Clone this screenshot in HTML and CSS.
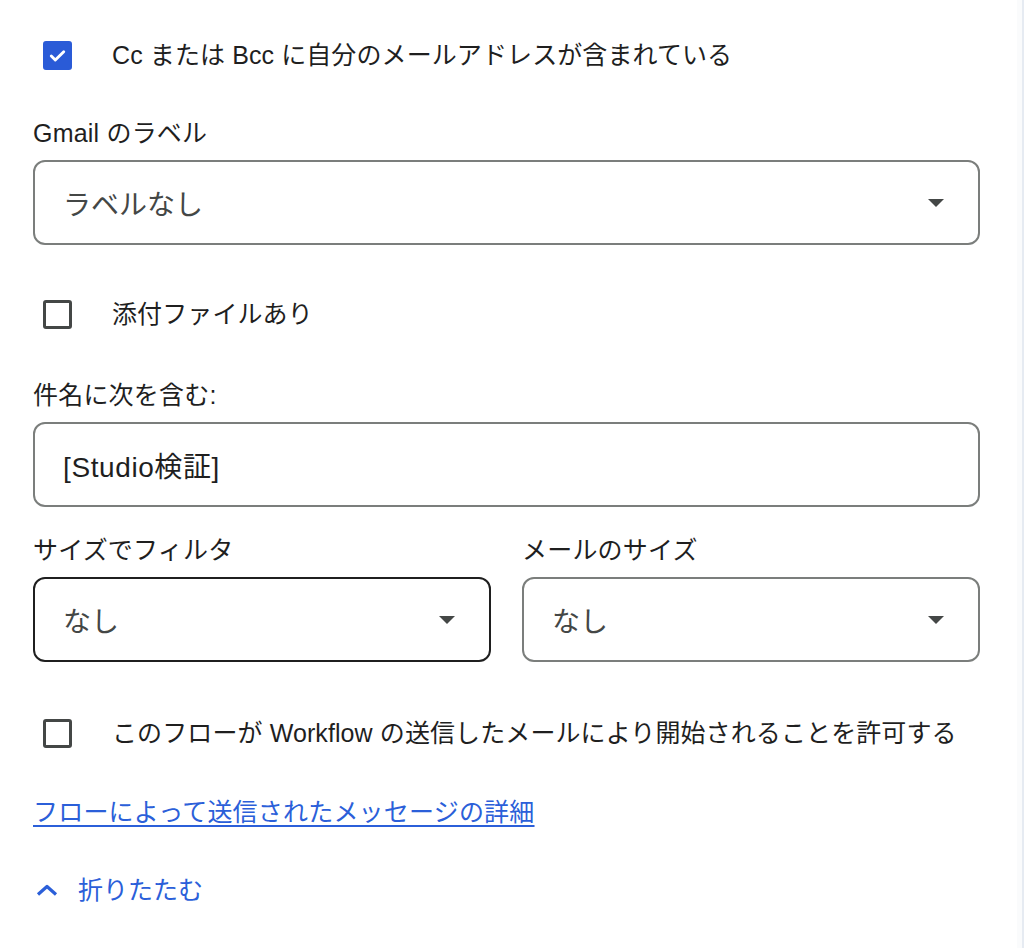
FILE: index.html
```html
<!DOCTYPE html>
<html lang="ja">
<head>
<meta charset="UTF-8">
<meta name="viewport" content="width=device-width, initial-scale=1.0">
<title>メールのトリガー</title>
<link rel="stylesheet" href="styles.css">
</head>
<body>
<div class="page">
    <div class="panel">
        <label class="check-row">
            <span class="checkbox checked">
                <svg viewBox="0 0 24 24" width="25" height="25"><path d="M5.5 12.5l4.2 4.2L18.5 8" fill="none" stroke="#fff" stroke-width="3" stroke-linecap="round" stroke-linejoin="round"/></svg>
            </span>
            <span class="check-text">Cc または Bcc に自分のメールアドレスが含まれている</span>
        </label>

        <div class="field field-first">
            <div class="field-label">Gmail のラベル</div>
            <div class="select">
                <span class="select-value">ラベルなし</span>
                <span class="arrow"></span>
            </div>
        </div>

        <label class="check-row check-attach">
            <span class="checkbox"></span>
            <span class="check-text">添付ファイルあり</span>
        </label>

        <div class="field field-subject">
            <div class="field-label">件名に次を含む:</div>
            <div class="text-input">[Studio検証]</div>
        </div>

        <div class="field-pair">
            <div class="field">
                <div class="field-label">サイズでフィルタ</div>
                <div class="select active">
                    <span class="select-value">なし</span>
                    <span class="arrow"></span>
                </div>
            </div>
            <div class="field">
                <div class="field-label">メールのサイズ</div>
                <div class="select">
                    <span class="select-value">なし</span>
                    <span class="arrow"></span>
                </div>
            </div>
        </div>

        <label class="check-row check-flow">
            <span class="checkbox"></span>
            <span class="check-text">このフローが Workflow の送信したメールにより開始されることを許可する</span>
        </label>

        <a class="link" href="#">フローによって送信されたメッセージの詳細</a>

        <button class="collapse" type="button">
            <svg viewBox="0 0 22 12" width="22" height="12"><path d="M2 10.5L11 2.5l9 8" fill="none" stroke="currentColor" stroke-width="3.2" stroke-linejoin="round"/></svg>
            <span>折りたたむ</span>
        </button>
    </div>
    <div class="edge"></div>
</div>
</body>
</html>
```

FILE: styles.css
```css
body {
    margin: 0;
    background-color: #ffffff;
    font-family: "Liberation Sans", "Noto Sans CJK JP", sans-serif;
    color: #1f1f1f;
}
.page {
    display: flex;
    height: 948px;
    overflow: hidden;
}
.panel {
    width: 947px;
    padding: 38px 37px 0 33px;
    display: flex;
    flex-direction: column;
    align-items: flex-start;
}
.edge {
    flex: 1;
    background-color: #fafbfc;
    border-right: 2px solid #e6ebf2;
}
.check-row {
    display: flex;
    align-items: center;
    height: 34px;
    padding-left: 10px;
    cursor: pointer;
}
.checkbox {
    width: 29px;
    height: 29px;
    box-sizing: border-box;
    border: 3px solid #444746;
    border-radius: 3px;
    display: flex;
    align-items: center;
    justify-content: center;
}
.checkbox.checked {
    background-color: #2a5bd7;
    border-color: #2a5bd7;
}
.check-text {
    margin-left: 40px;
    font-size: 25px;
    letter-spacing: 0.1px;
    line-height: 34px;
}
.field {
    display: flex;
    flex-direction: column;
    align-self: stretch;
}
.field-first {
    margin-top: 44px;
}
.check-attach {
    margin-top: 52px;
}
.field-subject {
    margin-top: 47px;
}
.field-label {
    font-size: 25px;
    letter-spacing: 0.2px;
    line-height: 34px;
    margin-bottom: 10px;
}
.select,
.text-input {
    height: 85px;
    box-sizing: border-box;
    border: 2px solid #7b7e7c;
    border-radius: 12px;
    display: flex;
    align-items: center;
    padding: 0 34px 0 28px;
    font-size: 28px;
    color: #444746;
}
.text-input {
    color: #1f1f1f;
    letter-spacing: 0.6px;
}
.select.active {
    border-color: #1f1f1f;
}
.select-value {
    flex: 1;
}
.arrow {
    width: 0;
    height: 0;
    border-left: 8px solid transparent;
    border-right: 8px solid transparent;
    border-top: 8px solid #444746;
}
.field-pair {
    margin-top: 26px;
    align-self: stretch;
    display: grid;
    grid-template-columns: 1fr 1fr;
    gap: 31px;
}
.check-flow {
    margin-top: 54px;
}
.link {
    margin-top: 45px;
    font-size: 25px;
    letter-spacing: 0.2px;
    line-height: 34px;
    color: #2b5fd9;
    text-decoration: underline;
    text-underline-offset: 4px;
}
.collapse {
    margin-top: 44px;
    display: flex;
    align-items: center;
    gap: 20px;
    background: none;
    border: none;
    padding: 0 0 0 3px;
    font-family: inherit;
    font-size: 25px;
    line-height: 34px;
    color: #2b5fd9;
    cursor: pointer;
}
```
